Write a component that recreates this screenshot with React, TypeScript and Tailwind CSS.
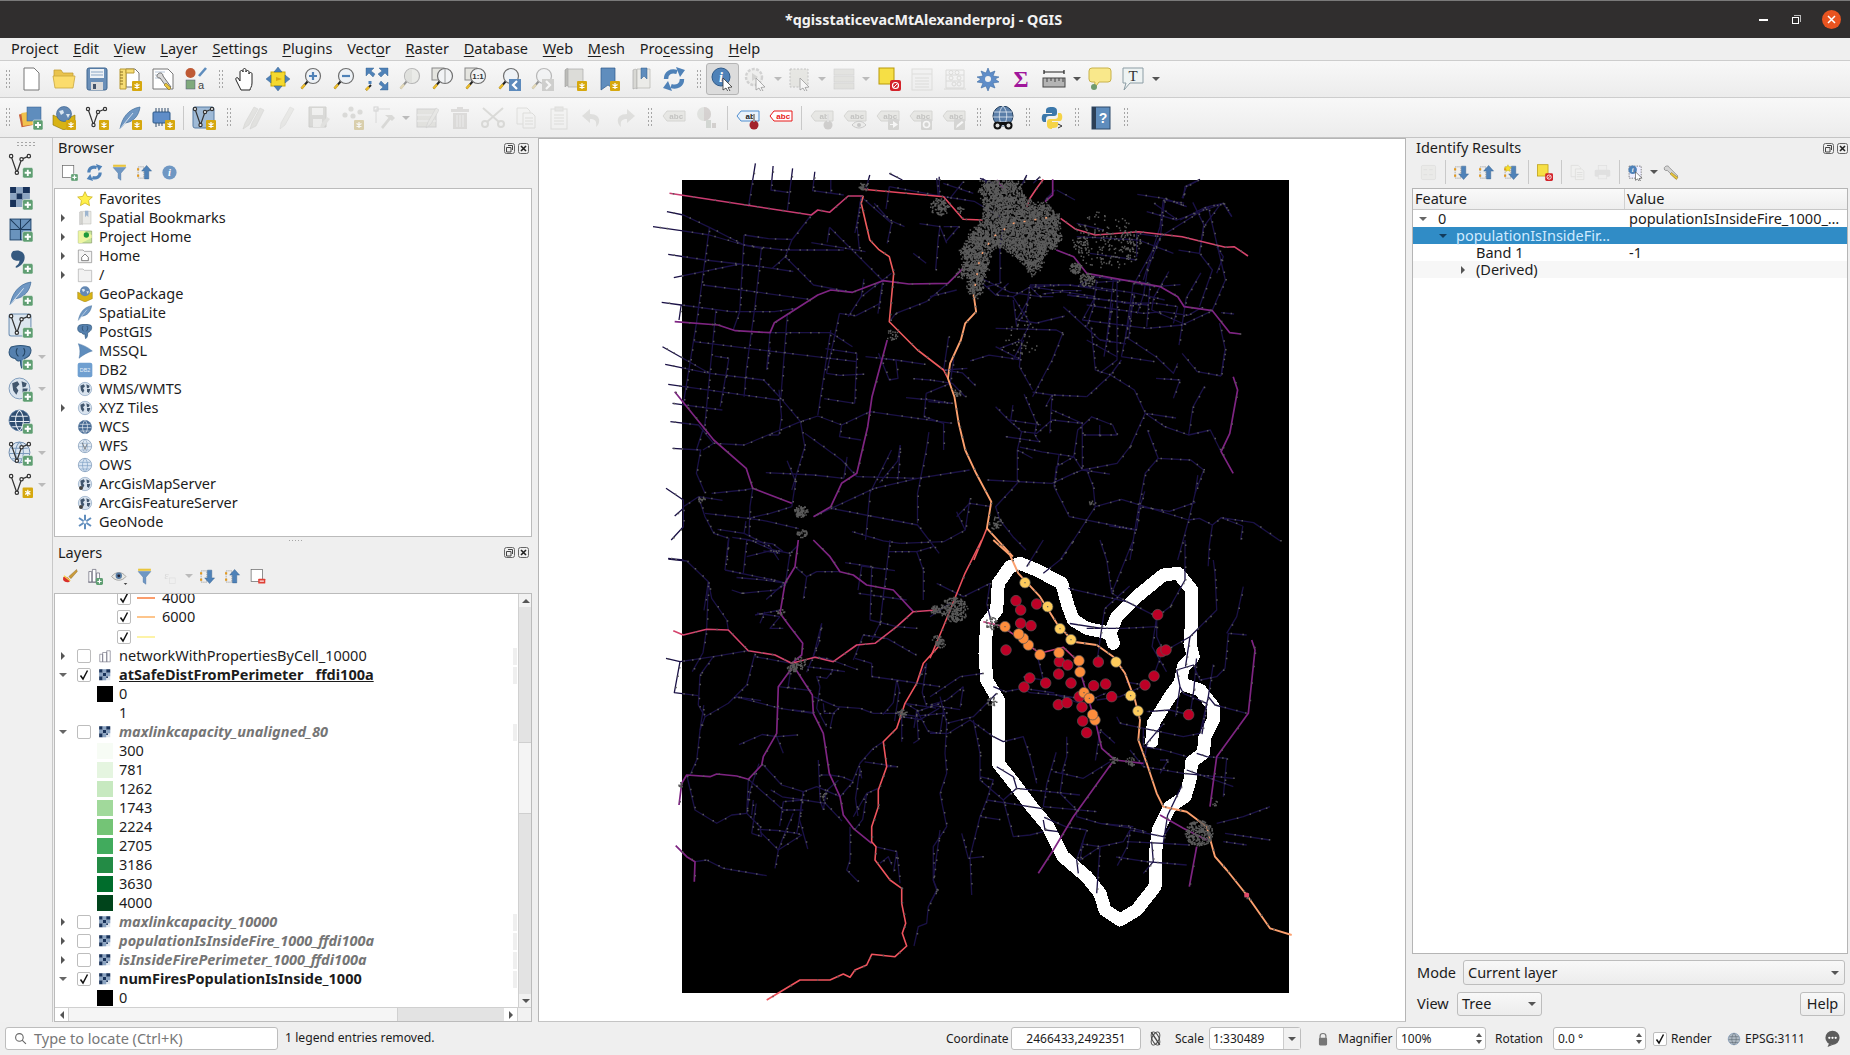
import React from "react";

/* ---------- icon pieces ---------- */
const Star = () => (<g><rect x="14" y="14" width="10" height="10" rx="1" fill="#d6a80f" /><path d="M19 16v6M16.5 17.5l5 3M21.5 17.5l-5 3" stroke="#fff" strokeWidth="1.2" /></g>);
const Plus = () => (<g><rect x="14" y="14" width="10" height="10" rx="1.5" fill="#5f9e72" stroke="#fff" strokeWidth=".5" /><path d="M19 16v6M16 19h6" stroke="#fff" strokeWidth="1.8" /></g>);
const Mag = ({ c = "#eef2f6" }: { c?: string }) => (<g><path d="M9 14L2.5 21.5" stroke="#222" strokeWidth="2" /><path d="M6 17.5L2.5 21.5" stroke="#e8b92a" strokeWidth="2.6" /><circle cx="14" cy="9" r="7.5" fill={c} stroke="#6f6f6f" strokeWidth="1.2" /></g>);
const VShape = () => (<g fill="none" stroke="#333" strokeWidth="1.2"><path d="M3 3L8.5 19L13 6L20 3" /><circle cx="3" cy="3" r="1.6" fill="#fff" /><circle cx="8.5" cy="19" r="1.6" fill="#fff" /><circle cx="13" cy="6" r="1.6" fill="#fff" /><circle cx="20" cy="3" r="1.6" fill="#fff" /></g>);
const Feather = () => (<g><path d="M2 23C4 12 10 3 22 1C21 9 16 16 7 17Z" fill="#6f97c3" stroke="#3f6b9a" strokeWidth=".7" /><path d="M2 23L15 7" stroke="#dce7f2" strokeWidth=".9" /></g>);
const Globe = ({ c = "#7d9fc6", l = "#e8eef5" }: { c?: string; l?: string }) => (<g><circle cx="11" cy="11" r="10" fill={c} stroke="#55779f" strokeWidth=".8" /><path d="M3 7h16M1.5 12h19M4 17h14M11 1c-5 5-5 15 0 20M11 1c5 5 5 15 0 20" stroke={l} strokeWidth="1" fill="none" /></g>);
const GlobeMap = () => (<g><circle cx="11" cy="11" r="10" fill="#d9e3ee" stroke="#6f8fb3" strokeWidth=".8" /><path d="M4 6l5-2 2 3-3 3 2 3-2 4-3-4zM13 4l5 2-1 3-3 1zM14 11h5l-2 6-3-2z" fill="#41566e" /></g>);
const Elephant = () => (<g><path d="M3 2c5-2 13-2 18 0 2 3 1 8-3 10l-2 1c0 3 0 7-3 9-1-3-1-5-1-7-2 1-4 0-5-2-3 0-6-2-6-6 0-2 1-4 2-5z" fill="#5580ae" stroke="#2e5479" strokeWidth="1" /><path d="M9 3c-2 3-1 6 1 8M15 3c2 3 1 6-1 8" stroke="#21415f" fill="none" /></g>);
const Book = () => (<g><path d="M4 3c2-1 3-1 4 0v19c-1-1-2-1-4 0z" fill="#d8d8d4" stroke="#aaa" strokeWidth=".7" /><path d="M8 2h13v19H8z" fill="#ebebe8" stroke="#b5b5b0" strokeWidth=".7" /></g>);
const Tag = ({ t, c = "#d9d9d0", s = "#b2b2a6", tc = "#8b8b80" }: { t: string; c?: string; s?: string; tc?: string }) => (<g><path d="M1 10L5 5H23V15H5Z" fill={c} stroke={s} strokeWidth="1" /><text x="14.2" y="13" fontSize="8" fontWeight="700" textAnchor="middle" fill={tc} fontFamily="Liberation Sans">{t}</text></g>);
const Checker = () => (<g><rect x="2" y="2" width="19" height="19" fill="#dfe6ee" /><path d="M2 2h6v6H2zM14 2h7v6h-7zM8 8h6v6H8zM2 14h6v7H2zM14 14h3v3h-3z" fill="#18325a" /><path d="M8 2h6v6H8zM2 8h6v6H2zM14 8h7v6h-7zM8 14h6v7H8z" fill="#8ba4c2" /></g>);
const Cursor = () => <path d="M12 11L21 20L17 20.5L19 24L17 24.5L15 21L12 23Z" fill="#fff" stroke="#333" strokeWidth=".8" />;
const Arrow = ({ up }: { up?: boolean }) => (<g><path d="M3 4h8v16H3z" fill="none" stroke="#888" strokeWidth=".9" strokeDasharray="2 1" /><rect x="1.5" y="6" width="3" height="3" fill="#e59a1d" /><rect x="1.5" y="15" width="3" height="3" fill="#e59a1d" />{up ? <path d="M15 2L22 10H18V21H12V10H8Z" fill="#4f82b8" stroke="#2e5a8a" strokeWidth=".6" /> : <path d="M15 22L22 14H18V3H12V14H8Z" fill="#4f82b8" stroke="#2e5a8a" strokeWidth=".6" />}</g>);

const ICONS: Record<string, React.ReactNode> = {
  new: <path d="M5 1h10l5 5v17H5z" fill="#fff" stroke="#777" strokeWidth="1" />,
  open: <g><path d="M2 6V3h7l2 3h10v5H2z" fill="#e9c34d" stroke="#c49f36" strokeWidth=".8" /><path d="M1 9h22l-2 12H3z" fill="#fbdc6c" stroke="#c9a63d" strokeWidth=".8" /></g>,
  save: <g><rect x="2" y="1" width="20" height="22" rx="2" fill="#6a8fb8" stroke="#3f6690" /><rect x="5" y="2" width="14" height="9" fill="#eef2f6" /><path d="M6 5h12M6 8h12" stroke="#8aa6c5" /><rect x="6" y="15" width="12" height="8" fill="#d9d9d9" /><rect x="8" y="17" width="3" height="5" fill="#44546a" /></g>,
  saveas: <g><path d="M8 2h9l4 4v14H8z" fill="#fff" stroke="#777" /><path d="M2 2h6v20H2z" fill="#f7dd75" stroke="#b99a34" /><path d="M2 5h3M2 8h3M2 11h3M2 14h3M2 17h3" stroke="#8a7020" /><path d="M8 2h8v4H8z" fill="#f7dd75" stroke="#b99a34" /><Star /></g>,
  report: <g><path d="M2 2h15l5 5v15H2z" fill="#fff" stroke="#777" /><path d="M4 5h10M4 8h8M4 11h7" stroke="#b9c7d8" /><path d="M7 7c2-2 5-1 5 2l8 11-3 2-8-11c-3 0-4-2-2-4z" fill="#d8d8d8" stroke="#555" strokeWidth=".8" /><path d="M15 16l5 5-2 2-5-5z" fill="#e8c53c" stroke="#8a7020" strokeWidth=".6" /></g>,
  style: <g><circle cx="6.5" cy="6" r="5" fill="#bf5a35" /><path d="M15 9L22 1" stroke="#5f8dbd" strokeWidth="2.6" /><rect x="2" y="13" width="9" height="9" fill="#7fa97c" stroke="#557" strokeWidth=".5" /><text x="17" y="22" fontSize="11" fill="#444" textAnchor="middle" fontFamily="Liberation Sans">a</text></g>,
  hand: <path d="M8 23L3 13c-1-2 1-3 2-2l2 3V5c0-2 3-2 3 0V3c0-2 3-2 3 0v2c0-2 3-2 3 0v2c0-2 3-2 3 0v9c0 4-2 5-2 7z" fill="#fff" stroke="#222" strokeWidth="1" />,
  pan: <g><rect x="5" y="5" width="14" height="14" fill="#f4d92f" stroke="#c9a80a" /><path d="M12 0l4 5H8zM12 24l-4-5h8zM0 12l5-4v8zM24 12l-5 4V8z" fill="#4f82b8" stroke="#2e5a8a" strokeWidth=".4" /><path d="M10 10l6 2-6 2z" fill="#d7a80f" /></g>,
  zin: <g><Mag /><path d="M14 5v8M10 9h8" stroke="#4f82b8" strokeWidth="2.2" /></g>,
  zout: <g><Mag /><path d="M10 9h8" stroke="#4f82b8" strokeWidth="2.2" /></g>,
  zfull: <g><path d="M1 1h8L6 4l4 3-2 3-4-4-3 3zM23 1v8l-3-3-4 4-3-3 4-3-3-3zM23 23h-8l3-3-4-3 2-3 4 4 3-3z" fill="#4f82b8" stroke="#2e5a8a" strokeWidth=".4" /><path d="M5 14v3" stroke="#4f82b8" strokeWidth="3" /><path d="M6 18L1 23" stroke="#222" strokeWidth="2" /><path d="M4 20L1 23" stroke="#e8b92a" strokeWidth="2.5" /></g>,
  zsel: <g><Mag c="#dfe3d5" /><path d="M14 2v14A7 7 0 0 1 14 2" fill="#c9cdbd" /></g>,
  zlay: <g><rect x="1" y="1" width="12" height="12" fill="#e5e5e0" stroke="#888" /><Mag c="#f1f3f5" /><path d="M14 1.5v15" stroke="#888" strokeWidth=".8" /></g>,
  z11: <g><rect x="1" y="1" width="12" height="12" fill="#e5e5e0" stroke="#888" /><Mag c="#f1f3f5" /><text x="14" y="12" fontSize="8" fontWeight="700" textAnchor="middle" fill="#333" fontFamily="Liberation Sans">1:1</text></g>,
  zlast: <g><Mag /><rect x="12" y="12" width="12" height="12" fill="#5c8abc" /><path d="M20 14l-4 4 4 4" stroke="#fff" strokeWidth="2.2" fill="none" /></g>,
  znext: <g><Mag /><rect x="12" y="12" width="12" height="12" fill="#a7a79f" /><path d="M16 14l4 4-4 4" stroke="#fff" strokeWidth="2.2" fill="none" /></g>,
  newmap: <g><path d="M2 3c2-2 3-2 4 0v17c-1-2-2-2-4 0z" fill="#bcbcb8" stroke="#999" strokeWidth=".6" /><path d="M5 2h15v18H5z" fill="#dcdcd8" stroke="#aaa" strokeWidth=".7" /><Star /></g>,
  newbm: <g><path d="M5 1h14v22l-7-5-7 5z" fill="#5f8dbd" stroke="#2e5a8a" strokeWidth=".7" /><Star /></g>,
  showbm: <g><Book /><path d="M12 1h6v11l-3-3-3 3z" fill="#5f8dbd" stroke="#2e5a8a" strokeWidth=".5" /></g>,
  refresh: <g fill="none" strokeLinecap="butt"><path d="M4 12C4 6 9 3 15 5" stroke="#4f82b8" strokeWidth="4.4" /><path d="M20 12c0 6-5 9-11 7" stroke="#4f82b8" strokeWidth="4.4" /><path d="M14 0l9 3-5 7zM10 24l-9-3 5-7z" fill="#4f82b8" /></g>,
  identify: <g><circle cx="10" cy="10" r="9" fill="#4f82b8" stroke="#2e5a8a" /><text x="10" y="15" fontSize="14" fontStyle="italic" fontWeight="700" fill="#fff" textAnchor="middle" fontFamily="Liberation Serif">i</text><Cursor /></g>,
  action: <g><circle cx="10" cy="10" r="8" fill="#e8e8e2" stroke="#aaa" strokeWidth="2.4" strokeDasharray="3 1.4" /><path d="M8 6l6 4-6 4z" fill="#b0b0a8" /><Cursor /></g>,
  select: <g><rect x="2" y="2" width="18" height="18" fill="#d8d8c8" stroke="#888" strokeDasharray="2 1.5" /><Cursor /></g>,
  attr: <g fill="#cfcfc3" stroke="#aaa" strokeWidth=".6"><rect x="2" y="2" width="20" height="6" /><rect x="2" y="9" width="20" height="6" /><rect x="2" y="16" width="20" height="6" /></g>,
  desel: <g><rect x="2" y="1" width="15" height="16" fill="#f6df45" stroke="#b8990b" /><rect x="13" y="13" width="11" height="11" rx="2" fill="#d3232a" /><circle cx="18.5" cy="18.5" r="3" fill="none" stroke="#fff" strokeWidth="1.2" /><path d="M16.5 20.5l4-4" stroke="#fff" /></g>,
  table: <g><rect x="2" y="2" width="20" height="21" fill="#eee" stroke="#c4c4bc" /><path d="M2 7h20M5 11h14M5 14h14M5 17h14M5 20h14" stroke="#c4c4bc" /></g>,
  abacus: <g fill="none" stroke="#bdbdb5"><path d="M3 3h18v18H3zM1 22h22" /><path d="M3 8h18M3 14h18" /><circle cx="8" cy="5.5" r="2" /><circle cx="14" cy="5.5" r="2" /><circle cx="8" cy="11" r="2" /><circle cx="16" cy="11" r="2" /><circle cx="11" cy="17" r="2" /><circle cx="16" cy="17" r="2" /></g>,
  gear: <g><path d="M12 1l2 5 5-2-2 5 6 1-4 2 4 3-6 1 2 5-5-2-2 5-2-5-5 2 2-5-6-1 4-3-4-2 6-1-2-5 5 2z" fill="#5f8dc8" stroke="#3d6ba3" strokeWidth=".6" /><circle cx="12" cy="12" r="3" fill="#f0f0f0" /></g>,
  sigma: <text x="12" y="20" fontSize="23" fontWeight="700" textAnchor="middle" fill="#a0169b" fontFamily="Liberation Serif">Σ</text>,
  measure: <g><path d="M2 5h20M2 3v4M22 3v4" stroke="#222" strokeWidth="1.2" /><rect x="1" y="11" width="22" height="9" fill="#b4b4b4" stroke="#444" /><path d="M5 11v4M9 11v3M13 11v4M17 11v3M21 11v4" stroke="#444" /></g>,
  tip: <g><path d="M4 1h16a3 3 0 0 1 3 3v8a3 3 0 0 1-3 3H11l-5 7 1-7H4a3 3 0 0 1-3-3V4a3 3 0 0 1 3-3z" fill="#f9e88b" stroke="#c8b24a" /><circle cx="6" cy="20" r="3" fill="#6f9a6f" /></g>,
  textann: <g><path d="M2 1h20v15H9l-6 7 2-7H2z" fill="#eef3f3" stroke="#8c9da5" /><text x="12" y="13.5" fontSize="15" textAnchor="middle" fill="#333" fontFamily="Liberation Serif">T</text></g>,
  layers: <g><rect x="1" y="7" width="14" height="13" fill="#c8603a" transform="rotate(-12 8 13)" /><rect x="3" y="6" width="14" height="13" fill="#f1c24d" transform="rotate(-8 10 12)" /><rect x="8" y="1" width="14" height="14" fill="#5f8dbd" stroke="#2e5a8a" strokeWidth=".5" /><Plus /></g>,
  gpkg: <g><path d="M1 9l11 5 11-5v10l-11 5-11-5z" fill="#d8b315" stroke="#8a7208" strokeWidth=".6" /><circle cx="12" cy="8" r="7.5" fill="#6388b3" stroke="#2e5a8a" strokeWidth=".6" /><path d="M7 5l4-1 1 3-3 2zM14 8h4l-2 4z" fill="#dbe6f0" /><Star /></g>,
  vstar: <g><VShape /><Star /></g>,
  vplus: <g><VShape /><Plus /></g>,
  fstar: <g><Feather /><Star /></g>,
  fplus: <g><Feather /><Plus /></g>,
  chip: <g><rect x="2" y="6" width="17" height="11" rx="1" fill="#5f8dc8" stroke="#2e5a8a" /><path d="M5 2v4M8 2v4M11 2v4M14 2v4M17 2v4M5 17v4M8 17v3M11 17v3" stroke="#2e4a6a" /><Star /></g>,
  vbox: <g><rect x="1" y="1" width="21" height="21" rx="2" fill="#9fbad6" stroke="#587ca3" /><VShape /><Star /></g>,
  vboxp: <g><rect x="1" y="1" width="21" height="21" rx="2" fill="#dce6ef" stroke="#6f8fb3" /><VShape /><Plus /></g>,
  pens: <g fill="#cfcfc7" stroke="#b0b0a8" strokeWidth=".6"><path d="M2 23l2-6L13 1l4 2-9 16z" /><path d="M9 23l2-6 8-15 4 2-8 16z" /></g>,
  pen: <path d="M6 23l1-6L16 1l4 2-9 16z" fill="#dcdcd4" stroke="#c0c0b8" strokeWidth=".6" />,
  saveedit: <g><path d="M2 1h17v20H2z" fill="#bdbdb3" stroke="#a5a59b" /><rect x="5" y="2" width="11" height="7" fill="#ececE6" /><rect x="6" y="13" width="9" height="8" fill="#e8e8e2" /><path d="M13 22l1-4 6-7 3 2-6 8z" fill="#cfcfc7" /></g>,
  points: <g fill="#bdbdb3"><circle cx="5" cy="9" r="2.6" /><circle cx="11" cy="3" r="2.6" /><circle cx="20" cy="6" r="2.6" /><circle cx="13" cy="10" r="2.6" /><Star /></g>,
  node: <g><path d="M3 3h14M3 3v14" stroke="#bbb" /><rect x="1" y="1" width="4" height="4" fill="none" stroke="#aaa" /><path d="M8 21l8-10 2 2-8 10zM12 9l7 0 3 3-3 3-7-6z" fill="#bdbdb3" /></g>,
  tpen: <g><rect x="2" y="3" width="19" height="18" fill="#cfcfc3" stroke="#aaa" /><path d="M2 9h19M2 15h19" stroke="#eee" /><path d="M11 22l2-6L21 2l3 2-8 14z" fill="#d9d9d1" stroke="#aaa" strokeWidth=".6" /></g>,
  trash: <g fill="#c4c0b9"><rect x="3" y="3" width="18" height="3" /><rect x="9" y="1" width="6" height="2" /><path d="M5 7h14v16H5z" /><path d="M9 9v12M12 9v12M15 9v12" stroke="#e8e8e8" /></g>,
  scissors: <g fill="none" stroke="#bdbdb3" strokeWidth="2"><circle cx="20" cy="18" r="3" /><circle cx="4" cy="18" r="3" /><path d="M2 2l16 14M22 2L6 16" /></g>,
  copy: <g fill="#f2f2f0" stroke="#c4c4bc"><path d="M3 2h10l3 3v13H3z" /><path d="M9 7h9l3 3v12H9z" /><path d="M11 12h8M11 15h8M11 18h8" /></g>,
  paste: <g fill="#f2f2f0" stroke="#c4c4bc"><rect x="4" y="3" width="16" height="20" /><rect x="8" y="1" width="8" height="4" fill="#d5d5cf" /><path d="M7 9h10M7 12h10M7 15h10M7 18h10" /></g>,
  undo: <path d="M10 3L2 10l8 7v-4c5 0 7 2 6 8 5-4 5-13-6-13z" fill="#c8c8c0" />,
  redo: <path d="M14 3l8 7-8 7v-4c-5 0-7 2-6 8-5-4-5-13 6-13z" fill="#c8c8c0" />,
  abc: <Tag t="abc" />,
  donut: <g><circle cx="9" cy="8" r="7" fill="#c9cfc3" /><path d="M9 1a7 7 0 0 1 0 14z" fill="#b8a9a2" /><rect x="11" y="14" width="5" height="8" fill="#a9bba9" /><rect x="17" y="17" width="4" height="5" fill="#b5a9a2" /></g>,
  abpin: <g><Tag t="ab" c="#e9f1fa" s="#4f8ed0" tc="#222" /><circle cx="18" cy="19" r="4.5" fill="#a3222c" /><path d="M18 8v8" stroke="#999" strokeWidth="2" /></g>,
  abcred: <Tag t="abc" c="#fff" s="#e81818" tc="#e81818" />,
  aboff: <g><Tag t="ab" /><circle cx="18" cy="19" r="4.5" fill="#aaa5a0" /><path d="M18 8v8" stroke="#ccc" strokeWidth="2" /></g>,
  abeye: <g><Tag t="abc" /><path d="M9 19c4-5 10-5 14 0-4 4-10 4-14 0z" fill="#e8e8e2" stroke="#999" /><circle cx="16" cy="19" r="2" fill="#999" /></g>,
  abmove: <g><Tag t="abc" /><rect x="12" y="13" width="11" height="11" rx="1" fill="#b5b5ad" /><path d="M14 18h3v-3l5 3.5-5 3.5v-3h-3z" fill="#fff" /></g>,
  abrot: <g><Tag t="abc" /><rect x="12" y="13" width="11" height="11" rx="1" fill="#b5b5ad" /><circle cx="17.5" cy="18.5" r="3" fill="none" stroke="#fff" strokeWidth="1.6" /></g>,
  abpen: <g><Tag t="abc" /><rect x="12" y="13" width="11" height="11" rx="1" fill="#b5b5ad" /><path d="M14 22l1-3 5-4 1.5 1.5-5 4z" fill="#fff" /></g>,
  search: <g><circle cx="12" cy="10" r="10" fill="#5a7ea8" stroke="#26415f" /><path d="M3 6h18M2 11h20M5 16h14M12 0c-5 5-5 15 0 20M12 0c5 5 5 15 0 20" stroke="#dfe8f2" fill="none" strokeWidth=".8" /><circle cx="6.5" cy="19.5" r="4" fill="#111" /><circle cx="17.5" cy="19.5" r="4" fill="#111" /><rect x="9" y="16" width="6" height="3" fill="#111" /><circle cx="6.5" cy="19.5" r="2" fill="#ddd" /><circle cx="17.5" cy="19.5" r="2" fill="#ddd" /></g>,
  python: <g><path d="M12 1c-5 0-6 1-6 4v2h6v1H4c-3 0-3 8 0 8h2v-3c0-2 1-3 3-3h5c2 0 3-1 3-3V5c0-3-2-4-5-4z" fill="#3c78ab" /><path d="M12 22c5 0 6-1 6-4v-2h-6v-1h8c3 0 3-8 0-8h-2v3c0 2-1 3-3 3h-5c-2 0-3 1-3 3v3c0 3 2 4 5 4z" fill="#f5d347" /><path d="M18 18l4 2-4 2" stroke="#333" fill="none" /></g>,
  help: <g><rect x="3" y="1" width="18" height="22" fill="#5f8dbd" stroke="#2e4a6a" /><rect x="3" y="1" width="4" height="22" fill="#2c4057" /><text x="14" y="17" fontSize="14" fontWeight="700" textAnchor="middle" fill="#fff" fontFamily="Liberation Sans">?</text></g>,
  checker: <g><Checker /><Plus /></g>,
  raster: <Checker />,
  meshp: <g><rect x="2" y="2" width="20" height="20" fill="#6a93bd" stroke="#264b72" /><path d="M2 12h20M12 2v20M2 2l10 10M22 2L12 12" stroke="#1d3a5a" /><Plus /></g>,
  comma: <g><path d="M5 2c6-2 11 1 11 6 0 5-4 9-8 10-1 0-1-1 0-2 2-1 3-3 3-5-4 1-8-1-8-5 0-2 1-3 2-4z" fill="#35597f" /><Plus /></g>,
  elep: <g><Elephant /><Plus /></g>,
  elep0: <Elephant />,
  globep: <g><GlobeMap /><Plus /></g>,
  wcsp: <g><Globe c="#2f4d70" /><Plus /></g>,
  wfsp: <g><Globe c="#dce6f0" l="#7c9bbd" /><VShape /><Plus /></g>,
  fav: <path d="M12 1l3.3 7 7.7 1-5.600 5.300 1.400 7.700L12 18l-6.800 4 1.400-7.700L1 9l7.700-1z" fill="#fff04a" stroke="#c2a80d" />,
  book: <Book />,
  bookb: <g><Book /><path d="M12 1h5v10l-2.500-3-2.500 3z" fill="#9db5cf" /></g>,
  prj: <g><path d="M2 3h20v18H2z" fill="#c7e59a" stroke="#8a9a6a" /><path d="M2 3h9l11 6v4L7 21H2z" fill="#eef5a2" /><circle cx="14" cy="9" r="4" fill="#1f9a3a" /></g>,
  home: <g><path d="M2 3h7l2 2h11v17H2z" fill="#f4f4f4" stroke="#888" /><path d="M7 14l5-5 5 5v5H7z" fill="#fff" stroke="#444" /></g>,
  folder: <path d="M2 3h7l2 2h11v17H2z" fill="#f2f2f2" stroke="#aaa" />,
  gpk: <g><path d="M1 9l11 5 11-5v10l-11 5-11-5z" fill="#d8b315" stroke="#8a7208" strokeWidth=".6" /><circle cx="12" cy="8" r="7.5" fill="#6388b3" /><path d="M7 5l4-1 1 3-3 2zM14 8h4l-2 4z" fill="#dbe6f0" /></g>,
  fea: <Feather />,
  mssql: <path d="M2 1c7 2 14 5 21 11-7 2-14 6-20 11 2-7 2-15-1-22z" fill="#5f8dbd" stroke="#3d6b9a" strokeWidth=".6" />,
  db2: <g><rect x="1" y="1" width="22" height="22" rx="3" fill="#6f9fd0" /><text x="12" y="15" fontSize="8" textAnchor="middle" fill="#eaf2fa" fontFamily="Liberation Sans">DB2</text></g>,
  wms: <g transform="translate(1 1)"><GlobeMap /></g>,
  wcs: <g transform="translate(1 1)"><Globe c="#476a93" /></g>,
  wfs: <g transform="translate(1 1)"><Globe c="#e3ebf3" l="#8ca8c6" /><path d="M7 6l4 10 3-8" stroke="#555" fill="none" /></g>,
  ows: <g transform="translate(1 1)"><Globe c="#d7e4f2" l="#7c9fc4" /></g>,
  arc: <g transform="translate(1 1)"><GlobeMap /><circle cx="5" cy="17" r="3" fill="#444" /></g>,
  geonode: <g stroke="#5f8dbd" strokeWidth="3"><path d="M12 1v22M3 6l18 12M21 6L3 18" /><circle cx="12" cy="12" r="3" fill="#fff" strokeWidth="1" /></g>,
  newgrp: <g><rect x="2" y="2" width="16" height="17" fill="#fff" stroke="#666" /><Plus /></g>,
  filter: <g><rect x="3" y="1" width="18" height="3" fill="#e9c53c" /><path d="M3 5h18l-7 8v10l-4-3v-7z" fill="#6f97c3" stroke="#3f6b9a" strokeWidth=".5" /></g>,
  colup: <Arrow up />,
  coldn: <Arrow />,
  starsdn: <g><Arrow /><path d="M7 1l1.500 3 3.500.5-2.500 2.500.5 3.500-3-1.500-3 1.500.5-3.500L2 4.500 5.500 4z" fill="#f6df28" stroke="#b59b0b" strokeWidth=".5" /></g>,
  info: <g><circle cx="12" cy="12" r="10" fill="#6f97c3" /><text x="12" y="17.500" fontSize="15" fontStyle="italic" fontWeight="700" textAnchor="middle" fill="#fff" fontFamily="Liberation Serif">i</text></g>,
  brush: <g><path d="M22 2L11 12l3 3L23 5z" fill="#c99b3a" stroke="#77571c" strokeWidth=".5" /><path d="M3 13c4-2 8 0 10 5-2 3-7 3-10-1z" fill="#d92f2a" /><path d="M4 11l9 7" stroke="#f2d44c" strokeWidth="2" /></g>,
  addgrp: <g><path d="M4 5h4v15H4zM9 2h5v18H9zM15 7h4v13h-4z" fill="#fff" stroke="#667" /><path d="M3 20h17" stroke="#667" /><rect x="14" y="14" width="10" height="10" rx="2" fill="#5f9e72" /><path d="M19 16v6M16 19h6" stroke="#fff" strokeWidth="1.600" /></g>,
  eye: <g><path d="M1 12c5-7 14-8 20 0-5 7-15 7-20 0z" fill="#e9e9e4" stroke="#888" /><circle cx="11" cy="11" r="4.500" fill="#567ba3" /><circle cx="11" cy="11" r="2" fill="#223" /><path d="M18 21l5 0-2.500 3z" fill="#444" /></g>,
  eps: <g><text x="8" y="15" fontSize="16" textAnchor="middle" fill="#bbb" fontFamily="Liberation Serif">ε</text><rect x="12" y="14" width="8" height="8" fill="none" stroke="#ccc" /></g>,
  remove: <g><rect x="3" y="2" width="16" height="17" fill="#fff" stroke="#666" /><rect x="13" y="15" width="10" height="7" rx="1" fill="#df3f35" /><path d="M15 18.500h6" stroke="#fff" strokeWidth="1.600" /></g>,
  netgrp: <g><path d="M3 9h5v13H3zM8 6h7v16H8zM15 3h6v19h-6z" fill="#fff" stroke="#667" /></g>,
  toggle: <g fill="#e4e4df" stroke="#c8c8c2"><rect x="2" y="2" width="20" height="20" rx="2" /><path d="M5 8h5M5 15h5M13 8h5M13 15h5" /></g>,
  print: <g><rect x="6" y="2" width="12" height="7" fill="#eee" stroke="#ccc" /><rect x="1" y="8" width="22" height="10" rx="2" fill="#cfcfcf" /><rect x="6" y="15" width="12" height="6" fill="#eee" stroke="#ccc" /></g>,
  idmode: <g><rect x="3" y="3" width="17" height="17" fill="#eef" stroke="#555" strokeDasharray="2 1.500" /><circle cx="8" cy="8" r="6" fill="#4f82b8" /><text x="8" y="11.500" fontSize="9" fontStyle="italic" fontWeight="700" textAnchor="middle" fill="#fff" fontFamily="Liberation Serif">i</text><Cursor /></g>,
  wrench: <g><path d="M2 5c2-3 6-3 7 0l12 12-3 4L6 9C3 10 1 8 2 5z" fill="#d5d5d5" stroke="#555" strokeWidth=".7" /><path d="M12 12l9 7-2 3-9-8z" fill="#e8c53c" stroke="#77600f" strokeWidth=".6" /></g>,
  cross: <g fill="none" stroke="#444" strokeWidth="1.300"><ellipse cx="12" cy="12" rx="5" ry="10" transform="rotate(-25 12 12)" /><ellipse cx="12" cy="12" rx="5" ry="10" transform="rotate(25 12 12)" /><path d="M6 3l12 18" strokeWidth="2" /></g>,
  lock: <g><path d="M7 11V7c0-6 10-6 10 0v4" fill="none" stroke="#777" strokeWidth="2" /><rect x="5" y="10" width="14" height="13" rx="2" fill="#777" /></g>,
  epsg: <g transform="translate(1 1)"><Globe c="#aeb8c2" l="#5f6a75" /></g>,
  msg: <g><circle cx="12" cy="11" r="10" fill="#5c5c5c" /><path d="M7 19l-2 5 7-3z" fill="#5c5c5c" /><circle cx="7.500" cy="11" r="1.600" fill="#fff" /><circle cx="12" cy="11" r="1.600" fill="#fff" /><circle cx="16.500" cy="11" r="1.600" fill="#fff" /></g>,
  locate: <g fill="none" stroke="#666" strokeWidth="2"><circle cx="10" cy="10" r="7" /><path d="M15 15l7 7" /></g>,
};

function Ic({ n, s = 24, off }: { n: string; s?: number; off?: boolean }) {
  return <svg viewBox="0 0 24 24" width={s} height={s} className={off ? "shrink-0 opacity-45 saturate-50" : "shrink-0"}>{ICONS[n]}</svg>;
}
const S = ({ n, off, s = 24 }: { n: string; off?: boolean; s?: number }) => <div className="w-[33px] h-full flex items-center justify-center shrink-0"><Ic n={n} off={off} s={s} /></div>;
const T = ({ n, off, s = 17 }: { n: string; off?: boolean; s?: number }) => <div className="w-[25px] h-full flex items-center justify-center shrink-0"><Ic n={n} off={off} s={s} /></div>;
const Grip = () => <div className="w-[16px] shrink-0 flex justify-center"><div className="w-[5px] h-[21px] bg-[radial-gradient(#a6a6a6_0.8px,transparent_1px)] bg-[length:3px_4px]" /></div>;
const Sep = () => <div className="w-[8px] shrink-0 flex justify-center"><div className="w-px h-[24px] bg-[#c9c9c9]" /></div>;
const Dd = ({ off, w = "w-[13px]" }: { off?: boolean; w?: string }) => <div className={`${w} shrink-0 flex justify-center`}><div className={`w-0 h-0 border-x-[4px] border-x-transparent border-t-[4px] ${off ? "border-t-[#bbb]" : "border-t-[#555]"}`} /></div>;
const DockBtns = () => (
  <div className="flex gap-[3px] items-center">
    <svg width="11" height="11" viewBox="0 0 11 11"><rect x=".5" y=".5" width="10" height="10" rx="2" fill="#efefef" stroke="#666" /><path d="M4 2.500h4.500v4.500M2.500 4.500h4.500v4.500h-4.500z" fill="none" stroke="#444" /></svg>
    <svg width="11" height="11" viewBox="0 0 11 11"><rect x=".5" y=".5" width="10" height="10" rx="2" fill="#efefef" stroke="#666" /><path d="M3 3l5 5M8 3l-5 5" stroke="#222" strokeWidth="1.600" /></svg>
  </div>
);
const Tri = ({ open }: { open?: boolean }) => open
  ? <div className="w-0 h-0 border-x-[4px] border-x-transparent border-t-[4px] border-t-[#666]" />
  : <div className="w-0 h-0 border-y-[4px] border-y-transparent border-l-[4px] border-l-[#555]" />;
const Check = ({ on }: { on?: boolean }) => (
  <div className="w-[14px] h-[14px] border border-[#bdbdbd] bg-white rounded-[2px] flex items-center justify-center shrink-0">
    {on && <svg width="12" height="12" viewBox="0 0 12 12"><path d="M2.500 6.500L5 10L9.500 1.500" fill="none" stroke="#111" strokeWidth="1.500" /></svg>}
  </div>
);

/* ---------- map data ---------- */
type Pt = [number, number];
const parse = (s: string, f: (x: number, y: number) => Pt): Pt[] => s.trim().split(/\s+/).map((p) => { const [a, b] = p.split(",").map(Number); return f(a, b); });
const z8 = (X: number, Y: number): Pt => [640 + X / 2.306, 140 + Y / 3];
const z9 = (X: number, Y: number): Pt => [640 + X / 3, 540 + Y / 3];
const z6 = (X: number, Y: number): Pt => [930 + X / 3, 540 + Y / 3];
const z10 = (X: number, Y: number): Pt => [930 + X / 3, 140 + Y / 3];
const toD = (p: Pt[]) => "M" + p.map((q) => `${q[0].toFixed(1)} ${q[1].toFixed(1)}`).join("L");

const dark8 = `266,70 250,200|307,78 302,150 345,158|352,85 340,210|403,95 398,152 470,165|30,260 95,272 160,285 240,315 330,330 470,330|62,215 100,225 160,262 240,315 280,325|65,343 150,360 230,372 305,385 335,350 350,300 395,225|78,413 230,372|50,487 95,495 210,515 310,515 360,505|145,435 280,458 390,478|160,262 130,550 100,790|240,285 230,515 215,570|95,495 90,540|280,325 265,500 245,690 240,770|335,350 400,435 490,457|395,308 520,335|437,262 560,422|125,605 500,665|52,620 160,700 285,720 325,775 370,845 410,828 465,855 530,815 720,850|58,673 160,700|65,733 320,780|175,510 150,850 130,930|205,655 185,800|300,575 292,690|340,520 325,770|440,570 410,825|460,520 430,700|300,578 440,578 490,620|710,430 660,485 590,520 575,545|580,400 510,470 480,530|500,640 495,790|520,650 590,660 595,715 575,720 550,640|660,760 655,830 700,850 700,930|660,760 715,730|665,785 720,790|75,790 190,810|70,845 135,855 170,910 240,915 295,885 370,845|75,925 140,930 130,1000 150,1060|145,930 170,910|295,885 320,885|370,845 380,920 350,1050|380,880 465,960 500,1010|465,855 460,890 510,900|290,998 400,1005 470,1015|500,1010 640,1015 760,990|400,1130 540,1045 640,1015|440,1105 640,1155 690,1240|600,915 595,1020|580,930 530,1060 520,1200|660,930 640,1060 640,1150|60,1045 100,1080 100,1160 72,1200|100,1100 135,1070 150,1130 170,1180 205,1195 200,1260|80,1128 100,1105|150,1120 250,1135 300,1120 350,1100|260,1045 240,1050 165,1060|65,1255 100,1260|240,1180 300,1220 320,1260|730,1130 760,1090 810,1100|730,1115 750,1170 700,1205 600,1210|820,800 850,840 880,875 870,930 905,955|860,795 855,840|880,875 915,880 950,840 1020,850|910,885 920,905|870,930 870,1030 820,1100 830,1140 860,1190 890,1230|800,1020 950,1030 1000,1000 1020,990 1100,970 1130,920 1165,820 1140,750 1085,705 1050,690 1040,560|1030,770 1085,705 1110,660|1030,770 950,765 935,800|950,765 945,880|950,810 1020,850 1020,990|1165,820 1210,860 1265,885 1315,870 1340,935|1170,870 1195,955 1270,960 1300,990 1280,1060 1265,1140 1240,1260|1195,955 1165,1000 1150,1100 1130,1260|1030,990 1045,1040 1050,1100 970,1260|955,1040 990,1130 1145,1170|1000,950 960,980 955,1040|1000,950 1020,990|1050,1100 1110,1078 1265,1140 1290,1135 1320,1155 1340,1133 1390,1158|1040,830 1090,855 1100,885 1020,885|1060,855 1060,890|910,440 980,435 1040,440 1145,460 1210,480|985,465 1170,495|1020,540 1170,565 1250,555 1320,512|1180,510 1260,555|1240,500 1230,550|1340,518 1370,522|820,465 860,470 900,440|860,470 900,550 880,600 830,625|885,600 860,660|820,565 960,570 975,580 950,660 905,770|880,600 875,680 905,750|850,430 820,465 790,430|1100,420 1100,660 1060,700|1140,460 1110,650|1050,470 1020,540|1090,490 1070,650|1140,430 1200,290 1310,200 1345,190 1365,230|1310,200 1350,420 1320,510|1210,175 1200,290 1170,390|1185,190 1240,240|1290,120 1260,140 1250,175|1210,175 1260,200|1120,590 1190,650 1230,700 1240,670|1250,640 1285,695 1340,708|1190,715 1245,720 1230,775|510,170 580,250 570,310|540,190 575,240 610,260|575,100 605,120|575,140 700,170|690,110 690,170|700,260 735,260 705,305|630,340 660,370|440,120 440,160|530,105 520,150|790,115 800,130|890,110 880,135|1340,190 1300,260 1290,340 1320,390 1290,500|1150,300 1230,340|1030,600 1100,650|820,620 880,660|700,690 755,685|720,730 750,770`;
const dark9 = `85,57 140,63 205,125 215,175 260,240 265,270|205,125 200,265|275,150 305,160 410,150 440,130|255,90 400,120 440,130|265,0 255,90|320,0 310,100|320,50 400,30 450,40 475,15|330,0 420,40|465,80 500,110 530,95 600,95|345,225 420,210|360,250 375,215|420,230 390,265 430,265|545,250 520,350|695,80 690,240|750,0 720,250 695,300|665,78 765,92|655,160 800,180|690,240 770,260 830,265|670,285 640,360|645,355 695,370 695,410 770,420 900,440|770,420 778,450|745,35 830,35 880,20|830,35 850,90 850,180|78,355 120,365 220,350 325,332|120,365 103,458 175,467|220,350 180,405 175,495 195,530 180,570 170,660 150,705|195,530 265,490 320,435 345,340|285,470 420,505|345,350 455,370|415,440 515,452|460,510 520,518|520,470 590,500 660,505 700,520 770,520|600,500 580,520 570,565|550,490 553,520 585,520|500,380 580,390 560,415 530,410 540,440|580,390 615,395|410,590 470,585|410,590 430,640|370,675 425,735 490,755 530,740 600,770|600,770 635,730 660,670 700,625 730,605|660,685 665,715|535,660 540,780 550,810|540,705 570,705|490,755 480,830 470,880 485,885 415,930 360,875|325,718 320,820 360,860 365,890|325,718 430,810 490,810|340,780 335,825|140,705 165,810 230,850 275,825 320,820|430,785 490,780|460,820 430,890 415,930 405,985|630,860 630,960 620,990 655,1025|640,830 680,760 715,745|165,965 200,960 250,985 380,1007|335,880 365,890|705,920 770,935 780,1030|720,970 745,950 755,975|900,870 880,1020 890,1050 865,1100 860,1150 835,1160 822,1218|740,680 770,680|795,490 830,510 835,600 820,610|785,530 785,605|830,510 865,575 900,580|860,370 830,430|900,490 830,515`;
const dark6 = `415,145 590,185 680,230 680,290 700,335 780,290 860,210 855,100 850,60|590,185 545,160 530,60 510,0|545,160 610,0|680,230 720,200 765,120 765,0|340,100 390,60 430,0|290,80 340,0|470,265 580,265 680,260|500,370 515,265|670,410 695,340|645,435 570,470 500,480|160,400 90,410 0,470|190,440 225,455 280,445 300,458 380,465 450,490|0,495 50,480 100,440|30,470 50,550 45,640 50,700 30,760 50,860 10,920 10,1020 22,1050 0,1090|50,550 130,530 200,460|0,580 55,580 120,540 190,590 220,605 280,590 300,650 320,730|130,540 150,640 150,720 220,780 250,890 300,885 340,875|200,680 250,710 260,745 450,765|150,710 190,720 170,780 150,830 120,950 125,1065|95,880 115,955 160,950|220,780 260,745|340,800 500,815|340,840 345,870 385,875|400,690 390,760 440,810 440,830 510,850 610,860|370,695 460,715 540,665|410,590 410,650 395,700|560,530 570,550 760,590 810,580|640,565 640,620 700,630 770,650|650,515 720,510 780,525|810,580 835,470 855,495 950,520|740,390 750,440 760,460 830,490|740,390 790,375 810,420 860,410 885,385 895,280 950,285|890,280 920,230 940,140|600,630 640,680 760,700 910,715|800,640 830,650 890,655 880,770|770,690 910,740|690,660 715,660 690,700|600,870 700,890 720,860|590,905 700,910 780,915|650,965 770,975|460,900 450,960 510,920 580,905 600,870|510,920 500,1060|470,870 460,900 440,960 445,1000|885,880 1020,900|860,850 940,830 1020,800|880,905 950,915|640,1000 670,965 665,905|20,130 100,170 180,130|0,230 60,190|320,340 340,420|510,570 555,610`;
const dark10 = `480,340 620,360|415,465 600,490 630,495|470,495 640,520 700,515|500,420 490,500 470,560|550,420 530,600|610,430 585,600|660,430 650,560|300,435 420,435 550,455|400,500 510,600|440,250 520,270|440,290 625,300|620,280 620,350|700,180 690,260 640,420|750,240 830,200|860,320 880,350 860,400|20,115 25,170|100,125 60,175|300,440 330,470 370,470|250,480 260,560|300,470 260,540|210,320 210,430 170,440|0,470 80,450|30,260 50,310|40,130 130,160|380,150 435,180|345,180 375,150|150,115 190,130|290,105 280,130|330,110 310,130|700,175 770,200|760,175 765,140 810,118|650,215 740,240 880,190 905,230`;

const pink = [
  { c: "#c93b71", pts: parse("68,160 395,225 410,210 437,217 480,168 515,168", z8) },
  { c: "#e8465f", pts: parse("515,148 700,170 745,238 790,240", z8) },
  { c: "#ef5b5d", pts: parse("515,168 510,190 530,300 550,328 575,350 585,400 575,545 640,630 700,690 710,715", z8) },
  { c: "#d5436c", pts: parse("970,235 1005,268 1050,285 1150,275 1250,290 1350,322 1370,320 1402,348", z8) },
  { c: "#d5436c", pts: parse("100,272 130,285 200,268 265,270 325,332 405,345 455,370 525,352 580,365 650,315 705,310 770,260 820,215 890,210", z9) },
  { c: "#f0545e", pts: parse("895,320 850,370 830,430 795,490 770,565 730,605 740,680 715,750 715,800 695,860 695,905 708,920 705,960 750,1020 785,1045 785,1090 797,1150 787,1180 800,1218 765,1250 695,1243 680,1275 645,1290 630,1312 610,1302 570,1320 480,1320 380,1380", z9) },
  { c: "#ea4f5d", pts: parse("155,0 105,100 40,260 0,355", z6) },
  { c: "#c23a78", pts: parse("160,245 215,258 330,340 400,322 440,360", z6) },
  { c: "#de4968", pts: parse("290,200 300,175 320,145 340,118", z10) },
];
const purple = [
  "80,545 180,555 220,572 300,578 310,548 410,465 440,450 490,457 560,422 620,432 710,430 745,385",
  "570,600 535,770 525,860 500,1000 465,1030 440,1100 400,1130",
  "80,755 170,900 245,985 260,1045 350,1090",
  "960,330 1000,350 1030,400 1200,440 1240,470 1255,500 1320,512 1360,578 1385,582",
  "1368,710 1378,750 1360,880 1340,935 1368,1000",
].map((s) => parse(s, z8)).concat([
  "475,0 465,80 435,130 420,220 450,260 488,310 485,345 455,370",
  "520,0 570,50 600,95 640,105 680,135 760,150 820,215",
  "455,385 415,440 410,580 370,650 365,675 325,718 290,708 230,702 210,710 140,705 125,730 117,795",
  "465,385 517,465 520,520 550,580 568,700 600,770 610,825 640,865 695,910",
  "107,917 140,950 165,965 163,1025",
].map((s) => parse(s, z9))).concat([
  "440,360 470,460 500,560 515,625 555,660 640,670",
  "545,670 430,830 370,930 325,1000",
  "965,300 975,330 955,520 860,650 840,800",
  "800,920 778,1040",
  "690,825 760,865 830,900",
].map((s) => parse(s, z6))).concat([
  "368,118 368,165 345,185",
  "200,120 225,150",
].map((s) => parse(s, z10)));
const orange1 = parse("770,470 775,515 750,550 740,600 715,670 710,715 725,770 735,850 750,930 775,1000 810,1085 800,1165 860,1250", z8);
const orange2 = parse("190,0 240,45 265,100 330,170 380,250 430,305 500,315 550,350 585,400 615,480 630,540 625,600 650,670 680,760 700,800 770,815 830,860 855,950 890,990 950,1065 1020,1165 1085,1185", z6);
const red8 = parse("800,1165 770,1260", z8);

const perimeter = parse("270,70 320,90 395,130 415,200 430,240 470,265 540,280 560,230 620,170 700,105 745,100 785,150 785,240 780,310 790,350 760,380 750,430 810,450 850,500 850,540 825,590 820,640 785,665 780,720 765,770 720,800 685,870 675,950 675,1040 620,1110 570,1140 525,1110 510,1060 470,1010 400,950 355,860 305,800 260,740 205,670 205,560 205,480 170,420 165,340 170,250 200,210 205,130 240,80 270,70", z6);
const perimeter2 = parse("665,605 670,550 720,470 750,430", z6);
const perimeter3 = parse("540,280 550,310", z6);

const darkBase: Pt[][] = [
  ...dark8.split("|").map((s) => parse(s, z8)),
  ...dark9.split("|").map((s) => parse(s, z9)),
  ...dark6.split("|").map((s) => parse(s, z6)),
  ...dark10.split("|").map((s) => parse(s, z10)),
];

let seed = 12345;
const rnd = () => { seed = (seed * 1664525 + 1013904223) % 4294967296; return seed / 4294967296; };

const branches: Pt[][] = [];
const insideMap = (x: number, y: number) => x > 688 && x < 1283 && y > 186 && y < 875;
for (let i = 0; i < 170; i++) {
  const r = darkBase[Math.floor(rnd() * darkBase.length)];
  const v = r[Math.floor(rnd() * r.length)];
  if (!insideMap(v[0], v[1])) continue;
  let a = Math.floor(rnd() * 4) * 1.571 + 0.15, x = v[0], y = v[1];
  const p: Pt[] = [[x, y]];
  const k = 1 + Math.floor(rnd() * 2);
  let ok = true;
  for (let j = 0; j < k; j++) { const l = 12 + rnd() * 22; x += Math.cos(a) * l; y += Math.sin(a) * l; if (!insideMap(x, y)) ok = false; p.push([x, y]); a += (rnd() - 0.5) * 1.4; }
  if (ok) branches.push(p);
}
const darkAll = [...darkBase, ...branches];

const dots: string[] = [];
const dot = (x: number, y: number) => dots.push(`M${x.toFixed(1)} ${y.toFixed(1)}h1.500`);
const along = (p: Pt[], step: number) => {
  for (let i = 0; i < p.length - 1; i++) {
    const dx = p[i + 1][0] - p[i][0], dy = p[i + 1][1] - p[i][1], L = Math.hypot(dx, dy);
    for (let t = rnd() * step; t < L; t += step * (0.6 + rnd() * 0.8)) dot(p[i][0] + (dx * t) / L, p[i][1] + (dy * t) / L);
  }
};
darkAll.forEach((p) => along(p, 11));
purple.forEach((p) => along(p, 20));
pink.forEach((r) => along(r.pts, 16));
along(orange1, 14);
along(orange2, 14);
const blob = (c: Pt, r: number, n: number) => { for (let i = 0; i < n; i++) { const a = rnd() * 6.283, d = r * Math.sqrt(rnd()); dot(c[0] + Math.cos(a) * d, c[1] + Math.sin(a) * d * 0.9); } };
const inPoly = (x: number, y: number, poly: Pt[]) => { let o = false; for (let i = 0, j = poly.length - 1; i < poly.length; j = i++) { if (poly[i][1] > y !== poly[j][1] > y && x < ((poly[j][0] - poly[i][0]) * (y - poly[i][1])) / (poly[j][1] - poly[i][1]) + poly[i][0]) o = !o; } return o; };
const town = parse("155,125 260,125 270,160 300,190 350,195 385,230 390,310 345,335 330,380 300,410 290,375 260,350 215,320 180,330 170,380 155,440 145,470 120,470 110,410 80,405 100,380 92,330 120,280 160,240 160,190 150,140", z10);
for (let i = 0; i < 9000; i++) { const x = 955 + rnd() * 108, y = 180 + rnd() * 120; if (inPoly(x, y, town)) { const jy = Math.max(181, y + rnd() * 6 - 3); dot(x + rnd() * 6 - 3, jy); } }
const spots: [Pt, number, number][] = [
  [z10(435, 385), 6, 70], [z10(470, 420), 8, 70], [z10(30, 195), 6, 40], [z10(90, 210), 4, 14], [z10(520, 300), 32, 110], [z10(450, 315), 9, 35], [z10(600, 300), 12, 30],
  [z9(475, 370), 7, 40], [z9(455, 385), 5, 35], [z9(785, 520), 5, 35], [z9(885, 210), 5, 40], [z9(890, 300), 5, 24],
  [z6(70, 210), 14, 240], [z6(30, 310), 5, 35], [z6(185, 250), 7, 45], [z6(185, 485), 5, 30], [z6(805, 880), 14, 280], [z6(550, 660), 4, 20], [z6(600, 665), 5, 25], [z6(855, 790), 3, 8], [z6(950, 1068), 3, 10],
  [z8(515, 140), 5, 35], [z8(690, 200), 10, 70], [z8(370, 1115), 7, 85], [z8(372, 1180), 5, 40], [z8(730, 760), 4, 18], [z8(580, 585), 6, 24], [z8(140, 1080), 4, 14], [z8(1040, 1090), 3, 8], [z8(820, 1150), 7, 35], [z8(880, 600), 18, 30], [z8(1100, 320), 24, 70],
  [z9(120, 735), 3, 10], [z9(420, 215), 4, 12], [z9(550, 770), 4, 10],
];
spots.forEach(([c, r, n]) => blob(c, r, n));
const dotPath = dots.join("");

const circles: [string, string][] = [
  ["#bd0026", "258,182 272,210 320,192 272,250 303,257 228,330 683,224 695,335 708,330 388,365 413,375 505,366 386,402 299,414 282,441 347,429 423,429 491,437 527,432 545,470 645,435 672,408 385,494 411,488 456,501 448,470 458,543 470,578 776,524"],
  ["#fd8d3c", "225,260 295,315 280,295 266,282 330,344 387,338 447,362 450,396 462,458 478,475 495,540 488,524"],
  ["#fecc5c", "285,128 353,200 390,266 423,299 558,366 602,467 624,513"],
];

function MapCanvas() {
  return (
    <svg viewBox="539 139 866 882" className="w-full h-full block">
      <rect x="682" y="180" width="607" height="813" fill="#000" />
      <g fill="none" stroke="#fff" strokeWidth="13" strokeLinejoin="round" strokeLinecap="round" shapeRendering="crispEdges">
        <path d={toD(perimeter)} /><path d={toD(perimeter2)} /><path d={toD(perimeter3)} />
      </g>
      <g fill="none" stroke="#1a1146" strokeWidth="1.300" strokeLinejoin="round">
        {darkAll.map((p, i) => <path key={i} d={toD(p)} />)}
      </g>
      <g fill="none" stroke="#7e2482" strokeWidth="1.700" strokeLinejoin="round">
        {purple.map((p, i) => <path key={i} d={toD(p)} />)}
      </g>
      <g fill="none" strokeLinejoin="round" strokeWidth="1.600">
        {pink.map((r, i) => <path key={i} d={toD(r.pts)} stroke={r.c} />)}
        <path d={toD(red8)} stroke="#ef5b5d" />
        <path d={toD(orange1)} stroke="#fca06e" strokeWidth="1.900" />
        <path d={toD(orange2)} stroke="#fca06e" strokeWidth="1.900" />
      </g>
      <path d={dotPath} stroke="#5a5a5a" strokeWidth="1.500" fill="none" />
      <path d={toD(parse("130,470 150,350 190,290 250,250 360,232", z10))} stroke="#fca06e" strokeWidth="1.500" strokeDasharray="2 9" fill="none" />
      <circle cx={z6(950, 1065)[0]} cy={z6(950, 1065)[1]} r="2.500" fill="#de4968" />
      {circles.map(([c, s]) => parse(s, z6).map((p, i) => <circle key={c + i} cx={p[0]} cy={p[1]} r="5.300" fill={c} stroke="#555" strokeWidth=".7" />))}
      {parse("285,128 353,200 390,266 423,299 225,260 602,467 624,513 462,458 478,475", z6).map((p, i) => <circle key={i} cx={p[0]} cy={p[1]} r=".7" fill="#555" />)}
    </svg>
  );
}

/* ---------- panels ---------- */
const browserRows: [string, string, boolean][] = [
  ["fav", "Favorites", false], ["bookb", "Spatial Bookmarks", true], ["prj", "Project Home", true], ["home", "Home", true], ["folder", "/", true],
  ["gpk", "GeoPackage", false], ["fea", "SpatiaLite", false], ["elep0", "PostGIS", false], ["mssql", "MSSQL", false], ["db2", "DB2", false],
  ["wms", "WMS/WMTS", false], ["wms", "XYZ Tiles", true], ["wcs", "WCS", false], ["wfs", "WFS", false], ["ows", "OWS", false],
  ["arc", "ArcGisMapServer", false], ["arc", "ArcGisFeatureServer", false], ["geonode", "GeoNode", false],
];
const greens: [string, string][] = [["#f7fcf5", "300"], ["#e5f5e0", "781"], ["#c7e9c0", "1262"], ["#a1d99b", "1743"], ["#74c476", "2224"], ["#41ab5d", "2705"], ["#238b45", "3186"], ["#006d2c", "3630"], ["#00441b", "4000"]];

function LayerRow({ name, open, on, cls = "", icon = "raster" }: { name: string; open?: boolean; on?: boolean; cls?: string; icon?: string }) {
  return (
    <div className="h-[19px] flex items-center relative">
      <div className="w-[10px] ml-[3px] flex justify-center"><Tri open={open} /></div>
      <div className="ml-[9px]"><Check on={on} /></div>
      <div className="ml-[7px]"><Ic n={icon} s={14} /></div>
      <span className={`ml-[7px] whitespace-nowrap ${cls}`}>{name}</span>
      <div className="absolute right-[0px] top-[1px] bottom-[1px] w-[4px] bg-[#efefef]" />
    </div>
  );
}
const Sym = ({ c, t }: { c: string; t: string }) => (
  <div className="h-[19.5px] flex items-center pl-[62px]">
    <Check on />
    <div className="ml-[6px] w-[18px] h-[2px]" style={{ background: c }} />
    <span className="ml-[7px]">{t}</span>
  </div>
);
const Legend = ({ c, t }: { c: string; t: string }) => (
  <div className="h-[19px] flex items-center pl-[42px]">
    <div className="w-[16px] h-[16px] shrink-0" style={{ background: c }} />
    <span className="ml-[6px]">{t}</span>
  </div>
);
const Arrowbtn = ({ d }: { d: "u" | "d" | "l" | "r" }) => (
  <div className="w-[13px] h-[13px] flex items-center justify-center shrink-0">
    {d === "u" && <div className="w-0 h-0 border-x-[4px] border-x-transparent border-b-[4px] border-b-[#555]" />}
    {d === "d" && <div className="w-0 h-0 border-x-[4px] border-x-transparent border-t-[4px] border-t-[#555]" />}
    {d === "l" && <div className="w-0 h-0 border-y-[4px] border-y-transparent border-r-[4px] border-r-[#555]" />}
    {d === "r" && <div className="w-0 h-0 border-y-[4px] border-y-transparent border-l-[4px] border-l-[#555]" />}
  </div>
);
const ml = (s: string, i: number) => (<>{s.slice(0, i)}<u className="underline-offset-2">{s[i]}</u>{s.slice(i + 1)}</>);

const Spin = () => (
  <div className="flex flex-col gap-[3px] items-center w-[12px] shrink-0">
    <div className="w-0 h-0 border-x-[3px] border-x-transparent border-b-[4px] border-b-[#555]" />
    <div className="w-0 h-0 border-x-[3px] border-x-transparent border-t-[4px] border-t-[#555]" />
  </div>
);
const box = "h-[23px] bg-white border border-[#bdbdbd] rounded-[3px] flex items-center shrink-0";

export default function App() {
  return (
    <div className="w-[1850px] h-[1055px] flex flex-col overflow-hidden bg-[#efefef] text-[#1c1c1c] text-[14.5px] font-['Noto_Sans',sans-serif]">
      {/* title */}
      <div className="h-[38px] shrink-0 bg-[#302e2e] border-t border-[#7a7a7a] flex items-center">
        <div className="flex-1" />
        <div className="text-[#f2f2f2] text-[14.3px] font-bold whitespace-nowrap pl-[6px]">*qgisstaticevacMtAlexanderproj - QGIS</div>
        <div className="flex-1 flex items-center justify-end pr-[9px]">
          <div className="w-[9px] h-[2px] bg-white mr-[24px]" />
          <div className="mr-[21px] w-[9px] h-[9px] relative"><div className="absolute left-0 bottom-0 w-[7px] h-[7px] border border-white" /><div className="absolute right-0 top-0 w-[7px] h-[7px] border-t border-r border-[#bbb]" /></div>
          <div className="w-[19px] h-[19px] rounded-full bg-[#e95420] flex items-center justify-center"><svg width="9" height="9" viewBox="0 0 9 9"><path d="M1 1l7 7M8 1l-7 7" stroke="#fff" strokeWidth="1.500" /></svg></div>
        </div>
      </div>
      {/* menu */}
      <div className="h-[22px] shrink-0 flex items-center pl-[11px] pb-[1px] gap-[14.75px] bg-[#efefef]">
        <span>{ml("Project", 3)}</span><span>{ml("Edit", 0)}</span><span>{ml("View", 0)}</span><span>{ml("Layer", 0)}</span><span>{ml("Settings", 0)}</span><span>{ml("Plugins", 0)}</span><span>{ml("Vector", 4)}</span><span>{ml("Raster", 0)}</span><span>{ml("Database", 0)}</span><span>{ml("Web", 0)}</span><span>{ml("Mesh", 0)}</span><span>{ml("Processing", 3)}</span><span>{ml("Help", 0)}</span>
      </div>
      {/* toolbar 1 */}
      <div className="h-[38px] shrink-0 flex items-center border-y border-[#cdcdcd] bg-gradient-to-b from-[#f8f8f8] to-[#ececec]">
        <div className="w-[14px] flex justify-center"><div className="w-[5px] h-[21px] bg-[radial-gradient(#a6a6a6_0.8px,transparent_1px)] bg-[length:3px_4px]" /></div>
        {["new", "open", "save", "saveas", "report", "style"].map((n) => <S key={n} n={n} />)}
        <Grip />
        <S n="hand" /><S n="pan" /><S n="zin" /><S n="zout" /><S n="zfull" /><S n="zsel" off /><S n="zlay" /><S n="z11" /><S n="zlast" /><S n="znext" off /><S n="newmap" /><S n="newbm" /><S n="showbm" /><S n="refresh" />
        <Grip />
        <div className="w-[33px] h-[32px] flex items-center justify-center shrink-0 bg-[#dcdcdc] border border-[#b5b5b5] rounded-[3px]"><Ic n="identify" /></div>
        <S n="action" off /><Dd off w="w-[11px]" /><S n="select" off /><Dd off w="w-[11px]" /><S n="attr" off /><Dd off w="w-[12px]" /><S n="desel" /><S n="table" off /><S n="abacus" off /><S n="gear" /><S n="sigma" /><S n="measure" /><Dd /><S n="tip" /><S n="textann" /><Dd />
      </div>
      {/* toolbar 2 */}
      <div className="h-[40px] shrink-0 flex items-center border-b border-[#c4c4c4] bg-gradient-to-b from-[#f8f8f8] to-[#ececec]">
        <div className="w-[14px] flex justify-center"><div className="w-[5px] h-[21px] bg-[radial-gradient(#a6a6a6_0.8px,transparent_1px)] bg-[length:3px_4px]" /></div>
        <S n="layers" /><S n="gpkg" /><S n="vstar" /><S n="fstar" /><S n="chip" /><Sep /><S n="vbox" />
        <Grip />
        <S n="pens" off /><S n="pen" off /><S n="saveedit" off /><S n="points" off /><S n="node" off /><Dd off w="w-[9px]" /><S n="tpen" off /><S n="trash" off /><S n="scissors" off /><S n="copy" off /><S n="paste" off /><S n="undo" off /><S n="redo" off />
        <Grip />
        <S n="abc" off /><S n="donut" off /><Sep /><S n="abpin" /><S n="abcred" /><Sep /><S n="aboff" off /><S n="abeye" off /><S n="abmove" off /><S n="abrot" off /><S n="abpen" off />
        <Grip />
        <S n="search" />
        <Grip />
        <S n="python" />
        <Grip />
        <S n="help" />
        <Grip />
      </div>

      {/* main */}
      <div className="flex-1 flex min-h-0">
        <div className="w-[53px] shrink-0 border-r border-[#c8c8c8] flex flex-col bg-[#f0f0f0]">
          <div className="h-[11px] flex justify-center items-center"><div className="w-[21px] h-[5px] bg-[radial-gradient(#a6a6a6_0.8px,transparent_1px)] bg-[length:4px_3px]" /></div>
          {[["vplus"], ["checker"], ["meshp"], ["comma"], ["fplus"], ["vboxp"], ["elep", "d"], ["globep", "d"], ["wcsp"], ["wfsp", "d"], ["vstar", "d"]].map(([n, d]) => (
            <div key={n} className="h-[32px] flex items-center pl-[8px]"><Ic n={n} s={25} />{d && <Dd w="w-[17px]" off />}</div>
          ))}
        </div>

        {/* docks */}
        <div className="w-[485px] shrink-0 flex flex-col">
          <div className="h-[20px] flex items-center justify-between pl-[5px] pr-[9px] shrink-0"><span>Browser</span><DockBtns /></div>
          <div className="h-[28px] flex items-center pl-[4px] shrink-0">
            <T n="newgrp" /><T n="refresh" /><T n="filter" /><T n="colup" /><T n="info" />
          </div>
          <div className="h-[349px] w-[478px] ml-[1px] mt-[2px] shrink-0 bg-white border border-[#bbb] overflow-hidden">
            {browserRows.map(([ic, t, arrow]) => (
              <div key={t} className="h-[19px] flex items-center">
                <div className="w-[10px] ml-[3px] flex justify-center">{arrow && <Tri />}</div>
                <div className="ml-[9px]"><Ic n={ic} s={16} /></div>
                <span className="ml-[6px] whitespace-nowrap">{t}</span>
              </div>
            ))}
          </div>
          <div className="h-[6px] shrink-0 flex justify-center items-center"><div className="w-[16px] h-[3px] bg-[radial-gradient(#a6a6a6_0.8px,transparent_1px)] bg-[length:3px_3px]" /></div>
          <div className="h-[19px] flex items-center justify-between pl-[5px] pr-[9px] shrink-0"><span>Layers</span><DockBtns /></div>
          <div className="h-[28px] flex items-center pl-[4px] shrink-0">
            <T n="brush" /><T n="addgrp" /><T n="eye" /><T n="filter" /><T n="eps" off /><Dd off /><T n="coldn" /><T n="colup" /><T n="remove" />
          </div>
          <div className="flex-1 min-h-0 w-[478px] ml-[1px] mt-[3px] bg-white border border-[#bbb] flex flex-col">
            <div className="flex-1 min-h-0 flex">
              <div className="flex-1 min-w-0 overflow-hidden pr-[1px]">
                <div className="-mt-[6px]">
                  <Sym c="#fb9d6c" t="4000" />
                  <Sym c="#fdc58c" t="6000" />
                  <Sym c="#fdf3a8" t="" />
                  <LayerRow name="networkWithPropertiesByCell_10000" icon="netgrp" />
                  <LayerRow name="atSafeDistFromPerimeter__ffdi100a" open on cls="font-bold underline" />
                  <Legend c="#000" t="0" />
                  <Legend c="#fff" t="1" />
                  <LayerRow name="maxlinkcapacity_unaligned_80" open cls="font-bold italic text-[#757575]" />
                  {greens.map(([c, t]) => <Legend key={t} c={c} t={t} />)}
                  <LayerRow name="maxlinkcapacity_10000" cls="font-bold italic text-[#757575]" />
                  <LayerRow name="populationIsInsideFire_1000_ffdi100a" cls="font-bold italic text-[#757575]" />
                  <LayerRow name="isInsideFirePerimeter_1000_ffdi100a" cls="font-bold italic text-[#757575]" />
                  <LayerRow name="numFiresPopulationIsInside_1000" open on cls="font-bold" />
                  <Legend c="#000" t="0" />
                </div>
              </div>
              <div className="w-[13px] shrink-0 border-l border-[#d0d0d0] flex flex-col bg-[#e3e3e3]">
                <div className="bg-[#f2f2f2]"><Arrowbtn d="u" /></div>
                <div className="h-[135px]" />
                <div className="h-[72px] bg-[#f4f4f4] border-y border-[#cfcfcf]" />
                <div className="flex-1" />
                <div className="bg-[#f2f2f2]"><Arrowbtn d="d" /></div>
              </div>
            </div>
            <div className="h-[14px] shrink-0 border-t border-[#d0d0d0] flex items-center">
              <Arrowbtn d="l" />
              <div className="w-[330px] h-full bg-[#f5f5f5] border-x border-[#d0d0d0]" />
              <div className="flex-1 h-full bg-[#e3e3e3]" />
              <Arrowbtn d="r" />
              <div className="w-[14px] h-full bg-[#f2f2f2] border-l border-[#d0d0d0]" />
            </div>
          </div>
        </div>

        {/* canvas */}
        <div className="w-[868px] shrink-0 bg-white border border-[#b5b5b5] border-b-[#c4c4c4] overflow-hidden">
          <MapCanvas />
        </div>

        {/* right */}
        <div className="flex-1 min-w-0 flex flex-col">
          <div className="h-[20px] flex items-center justify-between pl-[10px] pr-[2px] shrink-0"><span>Identify Results</span><DockBtns /></div>
          <div className="h-[28px] flex items-center pl-[10px] shrink-0">
            <T n="toggle" off /><Sep /><T n="coldn" /><T n="colup" /><T n="starsdn" /><Sep /><T n="desel" /><Sep /><T n="copy" off /><T n="print" off /><Sep /><T n="idmode" /><Dd w="w-[11px]" /><T n="wrench" />
          </div>
          <div className="h-[766px] mt-[2px] ml-[6px] mr-[2px] bg-white border border-[#b5b5b5] shrink-0 flex flex-col overflow-hidden">
            <div className="h-[21px] flex bg-gradient-to-b from-[#fafafa] to-[#eeeeee] border-b border-[#c8c8c8] shrink-0">
              <div className="w-[212px] pl-[2px] border-r border-[#d0d0d0] flex items-center">Feature</div>
              <div className="flex-1 pl-[2px] flex items-center">Value</div>
            </div>
            <div className="h-[17px] flex items-center shrink-0">
              <div className="w-[212px] flex items-center pl-[6px]"><Tri open /><span className="ml-[11px]">0</span></div>
              <div className="flex-1 min-w-0 pl-[4px] whitespace-nowrap overflow-hidden">populationIsInsideFire_1000_…</div>
            </div>
            <div className="h-[17px] flex items-center shrink-0 bg-[#308cc6] text-[#cfeaff]">
              <div className="w-[212px] flex items-center pl-[26px]"><div className="w-0 h-0 border-x-[4px] border-x-transparent border-t-[4px] border-t-[#123c5c]" /><span className="ml-[9px] whitespace-nowrap">populationIsInsideFir…</span></div>
            </div>
            <div className="h-[17px] flex items-center shrink-0">
              <div className="w-[212px] pl-[63px]">Band 1</div>
              <div className="pl-[4px]">-1</div>
            </div>
            <div className="h-[17px] flex items-center shrink-0 bg-[#f7f7f7]">
              <div className="w-[212px] flex items-center pl-[48px]"><Tri /><span className="ml-[11px]">(Derived)</span></div>
            </div>
          </div>
          <div className="flex-1 flex flex-col px-[6px]">
            <div className="h-[25px] mt-[6px] flex items-center">
              <span className="w-[51px] pl-[5px] shrink-0">Mode</span>
              <div className="flex-1 h-[25px] mr-[-1px] border border-[#bdbdbd] rounded-[3px] bg-gradient-to-b from-[#f8f8f8] to-[#ececec] flex items-center justify-between px-[4px]"><span>Current layer</span><Dd w="w-[10px]" /></div>
            </div>
            <div className="h-[25px] mt-[6px] flex items-center">
              <span className="w-[45px] pl-[5px] shrink-0">View</span>
              <div className="w-[85px] h-[24px] border border-[#bdbdbd] rounded-[3px] bg-gradient-to-b from-[#f8f8f8] to-[#ececec] flex items-center justify-between px-[4px]"><span>Tree</span><Dd w="w-[10px]" /></div>
              <div className="flex-1" />
              <div className="w-[45px] h-[24px] mr-[-1px] border border-[#bdbdbd] rounded-[3px] bg-gradient-to-b from-[#f8f8f8] to-[#ececec] flex items-center justify-center">Help</div>
            </div>
          </div>
        </div>
      </div>

      {/* status */}
      <div className="h-[33px] shrink-0 flex items-center bg-[#efefef] text-[12px]">
        <div className="ml-[5px] w-[273px] h-[23px] bg-white border border-[#bdbdbd] rounded-[3px] flex items-center pl-[8px] text-[14.5px] text-[#777] shrink-0"><Ic n="locate" s={13} /><span className="ml-[7px]">Type to locate (Ctrl+K)</span></div>
        <span className="ml-[7px] whitespace-nowrap w-[661px] text-[12.2px]">1 legend entries removed.</span>
        <span className="w-[60px] whitespace-nowrap">Coordinate</span>
        <div className={`${box} ml-[5px] w-[130px] justify-center`}>2466433,2492351</div>
        <div className="ml-[6px] w-[17px]"><Ic n="cross" s={17} /></div>
        <span className="ml-[11px] w-[30px]">Scale</span>
        <div className={`${box} ml-[4px] w-[92px] pl-[3px] justify-between`}><span>1:330489</span><div className="h-full w-[17px] border-l border-[#ccc] flex items-center justify-center bg-[#f1f1f1]"><Dd w="w-[8px]" /></div></div>
        <div className="ml-[15px] w-[14px]"><Ic n="lock" s={14} /></div>
        <span className="ml-[8px] w-[52px]">Magnifier</span>
        <div className={`${box} ml-[6px] w-[90px] pl-[4px] justify-between`}><span>100%</span><Spin /></div>
        <span className="ml-[9px] w-[48px]">Rotation</span>
        <div className={`${box} ml-[10px] w-[93px] pl-[4px] justify-between`}><span>0.0 °</span><Spin /></div>
        <div className="ml-[7px]"><Check on /></div>
        <span className="ml-[4px] w-[39px]">Render</span>
        <div className="ml-[17px] w-[14px]"><Ic n="epsg" s={14} /></div>
        <span className="ml-[4px] w-[57px] whitespace-nowrap">EPSG:3111</span>
        <div className="ml-[22px] w-[17px]"><Ic n="msg" s={17} /></div>
      </div>
    </div>
  );
}
